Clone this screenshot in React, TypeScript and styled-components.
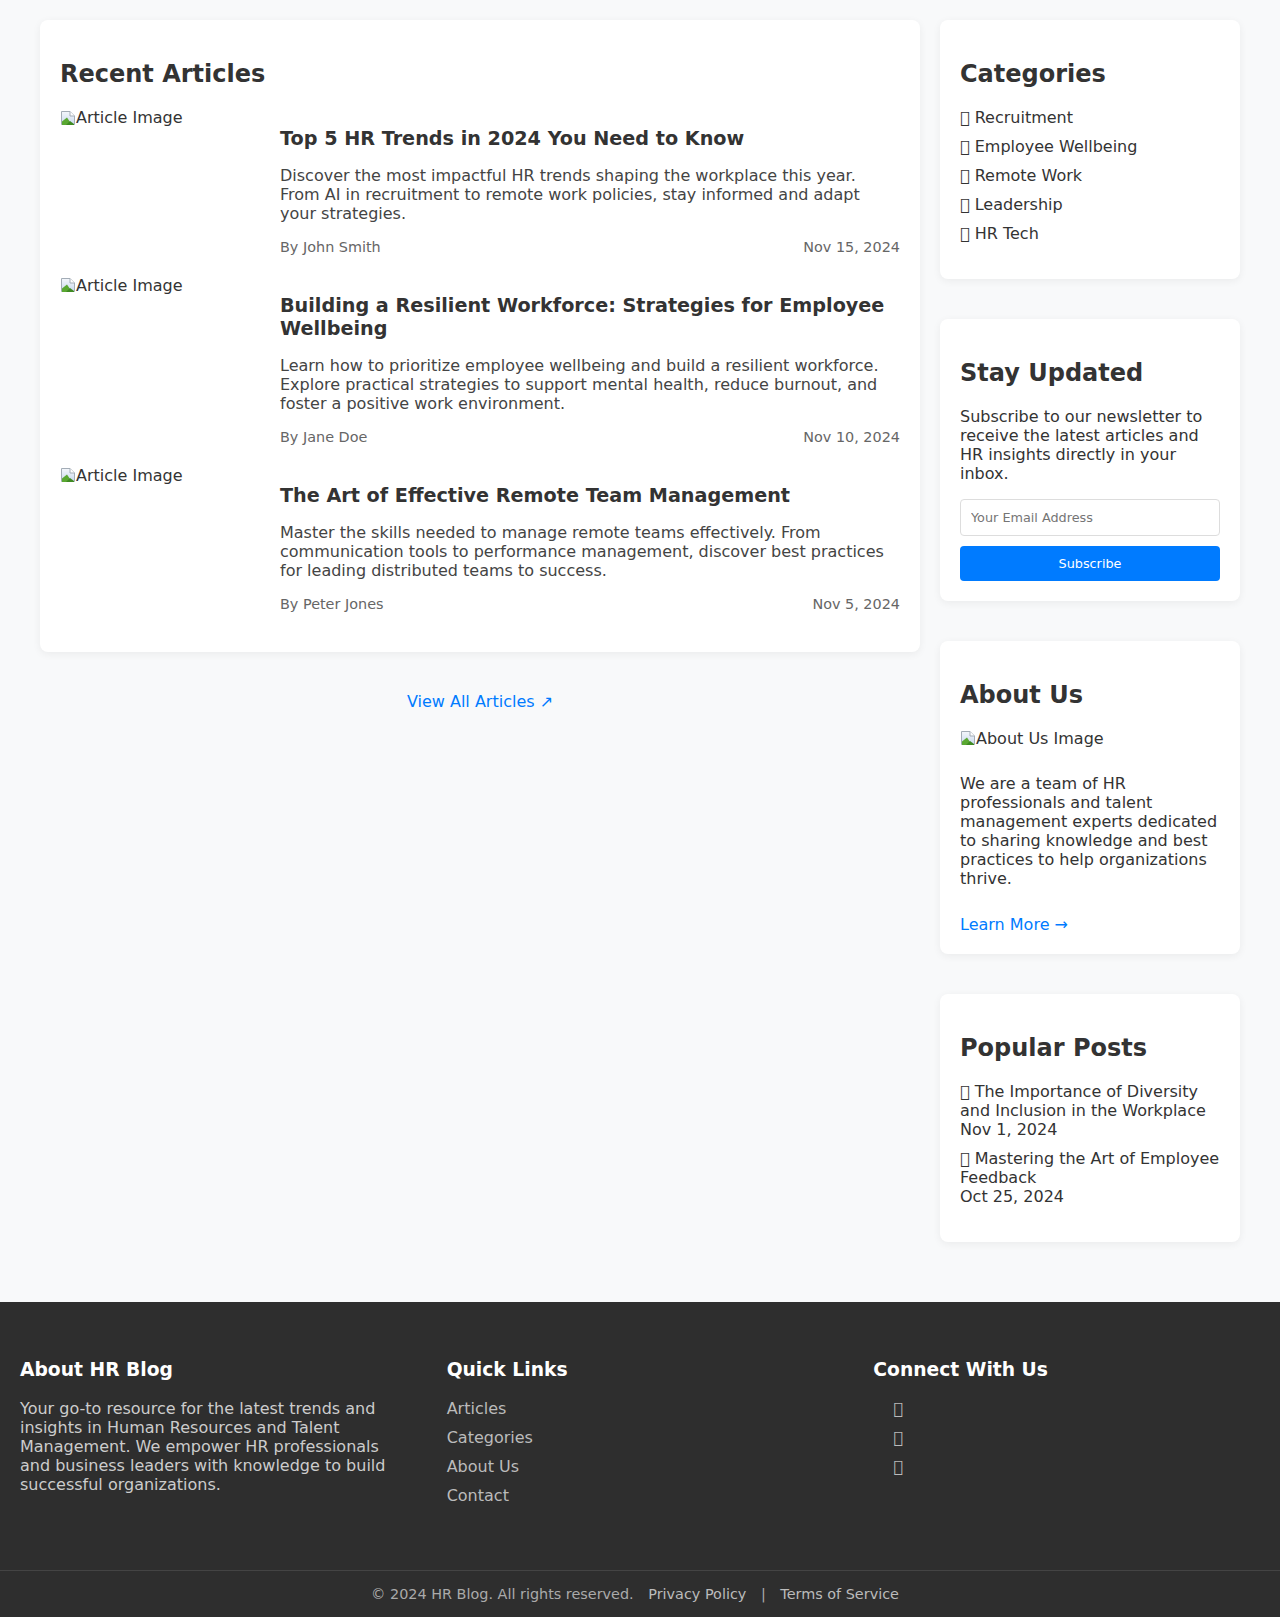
import React from 'react';
import styled, { createGlobalStyle } from 'styled-components';

const GlobalStyle = createGlobalStyle`
  *, *::before, *::after { box-sizing: border-box; }
  html, body { margin: 0; padding: 0; }
  body {
    background: #f8f9fa;
    font-family: "DejaVu Sans", "Noto Sans", sans-serif;
    font-size: 16px;
    color: #333;
  }
`;

const Container = styled.div`
  max-width: 1240px;
  margin: 0 auto;
  padding: 20px;
  display: grid;
  grid-template-columns: 1fr 300px;
  gap: 20px;
  align-items: start;
`;

const Main = styled.main`
  min-width: 0;
`;

const Card = styled.section`
  background: #fff;
  border-radius: 8px;
  padding: 20px;
  box-shadow: 0 2px 8px rgba(0, 0, 0, 0.06);
`;

const CardTitle = styled.h2`
  font-size: 24px;
  font-weight: bold;
  color: #333;
  margin: 19.92px 0;
`;

const ArticleRow = styled.article`
  display: flex;
  gap: 20px;
  margin-bottom: 20px;
`;

const ImageSlot = styled.div`
  width: 200px;
  flex-shrink: 0;
  color: #333;
  display: flex;
  align-items: center;
  align-self: flex-start;
  height: 20px;
`;

const ArticleBody = styled.div`
  flex: 1;
  min-width: 0;
`;

const ArticleTitle = styled.h3`
  font-size: 19.2px;
  font-weight: bold;
  color: #333;
  margin: 19.2px 0 16px;
`;

const Excerpt = styled.p`
  margin: 16px 0;
  color: #444;
`;

const Meta = styled.div`
  display: flex;
  justify-content: space-between;
  font-size: 14.4px;
  color: #666;
`;

const ViewAllRow = styled.div`
  text-align: center;
  margin-top: 40px;
`;

const BlueLink = styled.a`
  color: #007bff;
  text-decoration: none;
`;

const Sidebar = styled.aside`
  display: flex;
  flex-direction: column;
  gap: 40px;
`;

const PlainList = styled.ul`
  list-style: none;
  padding: 0;
  margin: 16px 0;
`;

const ListItem = styled.li`
  margin-bottom: 10px;
`;

const IconGlyph = styled.span`
  margin-right: 0;
`;

const DarkLink = styled.a`
  color: #333;
  text-decoration: none;
`;

const PostLink = styled(DarkLink)`
  display: block;
`;

const PostDate = styled.span`
  display: block;
  color: #333;
`;

const BodyText = styled.p`
  margin: 16px 0;
  color: #333;
`;

const NewsForm = styled.form`
  display: flex;
  flex-direction: column;
  gap: 10px;
`;

const EmailInput = styled.input`
  width: 100%;
  padding: 10px;
  border: 1px solid #ddd;
  border-radius: 4px;
  font-family: inherit;
  font-size: 12.8px;
  color: #333;
  background: #fff;
  &::placeholder { color: #757575; }
`;

const SubmitButton = styled.button`
  width: 100%;
  padding: 10px;
  border: none;
  border-radius: 4px;
  background: #007bff;
  color: #fff;
  font-family: inherit;
  font-size: 12.8px;
  cursor: pointer;
`;

const AboutImage = styled.div`
  display: flex;
  align-items: center;
  height: 20px;
  margin-bottom: 26px;
`;

const AboutText = styled.p`
  margin: 0 0 27px;
  color: #333;
`;

const Footer = styled.footer`
  background: #2e2e2e;
  color: #ccc;
  margin-top: 40px;
  padding-top: 38px;
`;

const FooterGrid = styled.div`
  display: grid;
  grid-template-columns: repeat(3, 1fr);
  gap: 40px;
  padding: 0 20px;
`;

const FooterHeading = styled.h3`
  font-size: 18.72px;
  font-weight: bold;
  color: #fff;
  margin: 18.72px 0;
`;

const FooterText = styled.p`
  margin: 16px 0;
  color: #ccc;
`;

const FooterLink = styled.a`
  color: #bbb;
  text-decoration: none;
`;

const SocialList = styled(PlainList)`
  padding-left: 20px;
`;

const FooterBottom = styled.div`
  margin-top: 49px;
  border-top: 1px solid #444;
  padding: 15px 0;
  text-align: center;
  font-size: 14.4px;
  color: #aaa;
`;

const BottomLink = styled.a`
  color: #bbb;
  text-decoration: none;
  margin: 0 10px;
`;

const BrokenImage: React.FC = () => (
  <svg width="16" height="16" viewBox="0 0 16 16" aria-hidden="true">
    <defs>
      <linearGradient id="sky" x1="0" y1="0" x2="0" y2="1">
        <stop offset="0" stopColor="#f4f7fb" />
        <stop offset="1" stopColor="#c9d9ee" />
      </linearGradient>
    </defs>
    <path d="M1.5 1.5h8.5l4.5 4.5v8.5h-13z" fill="url(#sky)" stroke="#a3acb6" />
    <path d="M10 1.5v4.5h4.5" fill="#fff" stroke="#a3acb6" />
    <path d="M2 15 V11.5 L7 7.5 L12 15 Z" fill="#5aa832" />
    <path d="M6 15 L10 11 L14 14 V15 Z" fill="#3f8a22" />
  </svg>
);

const articles = [
  {
    title: 'Top 5 HR Trends in 2024 You Need to Know',
    excerpt:
      'Discover the most impactful HR trends shaping the workplace this year. From AI in recruitment to remote work policies, stay informed and adapt your strategies.',
    author: 'By John Smith',
    date: 'Nov 15, 2024',
  },
  {
    title: 'Building a Resilient Workforce: Strategies for Employee Wellbeing',
    excerpt:
      'Learn how to prioritize employee wellbeing and build a resilient workforce. Explore practical strategies to support mental health, reduce burnout, and foster a positive work environment.',
    author: 'By Jane Doe',
    date: 'Nov 10, 2024',
  },
  {
    title: 'The Art of Effective Remote Team Management',
    excerpt:
      'Master the skills needed to manage remote teams effectively. From communication tools to performance management, discover best practices for leading distributed teams to success.',
    author: 'By Peter Jones',
    date: 'Nov 5, 2024',
  },
];

const categories = [
  { icon: '\uf0b1', label: 'Recruitment' },
  { icon: '\uf15c', label: 'Employee Wellbeing' },
  { icon: '\uf015', label: 'Remote Work' },
  { icon: '\uf0c0', label: 'Leadership' },
  { icon: '\uf109', label: 'HR Tech' },
];

const popular = [
  { title: 'The Importance of Diversity and Inclusion in the Workplace', date: 'Nov 1, 2024' },
  { title: 'Mastering the Art of Employee Feedback', date: 'Oct 25, 2024' },
];

const App: React.FC = () => (
  <>
    <GlobalStyle />
    <Container>
      <Main>
        <Card>
          <CardTitle>Recent Articles</CardTitle>
          {articles.map((a) => (
            <ArticleRow key={a.title}>
              <ImageSlot>
                <BrokenImage />
                <span>Article Image</span>
              </ImageSlot>
              <ArticleBody>
                <ArticleTitle>{a.title}</ArticleTitle>
                <Excerpt>{a.excerpt}</Excerpt>
                <Meta>
                  <span>{a.author}</span>
                  <span>{a.date}</span>
                </Meta>
              </ArticleBody>
            </ArticleRow>
          ))}
        </Card>
        <ViewAllRow>
          <BlueLink href="#">View All Articles ↗</BlueLink>
        </ViewAllRow>
      </Main>

      <Sidebar>
        <Card>
          <CardTitle>Categories</CardTitle>
          <PlainList>
            {categories.map((c) => (
              <ListItem key={c.label}>
                <DarkLink href="#">
                  <IconGlyph>{c.icon}</IconGlyph> {c.label}
                </DarkLink>
              </ListItem>
            ))}
          </PlainList>
        </Card>

        <Card>
          <CardTitle>Stay Updated</CardTitle>
          <BodyText>
            Subscribe to our newsletter to receive the latest articles and HR insights directly in your inbox.
          </BodyText>
          <NewsForm onSubmit={(e) => e.preventDefault()}>
            <EmailInput type="email" placeholder="Your Email Address" />
            <SubmitButton type="submit">Subscribe</SubmitButton>
          </NewsForm>
        </Card>

        <Card>
          <CardTitle>About Us</CardTitle>
          <AboutImage>
            <BrokenImage />
            <span>About Us Image</span>
          </AboutImage>
          <AboutText>
            We are a team of HR professionals and talent management experts dedicated to sharing knowledge and best
            practices to help organizations thrive.
          </AboutText>
          <BlueLink href="#">Learn More →</BlueLink>
        </Card>

        <Card>
          <CardTitle>Popular Posts</CardTitle>
          <PlainList>
            {popular.map((p) => (
              <ListItem key={p.title}>
                <PostLink href="#">
                  <IconGlyph>{'\uf15c'}</IconGlyph> {p.title}
                </PostLink>
                <PostDate>{p.date}</PostDate>
              </ListItem>
            ))}
          </PlainList>
        </Card>
      </Sidebar>
    </Container>

    <Footer>
      <FooterGrid>
        <div>
          <FooterHeading>About HR Blog</FooterHeading>
          <FooterText>
            Your go-to resource for the latest trends and insights in Human Resources and Talent Management. We
            empower HR professionals and business leaders with knowledge to build successful organizations.
          </FooterText>
        </div>
        <div>
          <FooterHeading>Quick Links</FooterHeading>
          <PlainList>
            {['Articles', 'Categories', 'About Us', 'Contact'].map((l) => (
              <ListItem key={l}>
                <FooterLink href="#">{l}</FooterLink>
              </ListItem>
            ))}
          </PlainList>
        </div>
        <div>
          <FooterHeading>Connect With Us</FooterHeading>
          <SocialList>
            {['\uf099', '\uf08c', '\uf09a'].map((g) => (
              <ListItem key={g}>
                <FooterLink href="#">{g}</FooterLink>
              </ListItem>
            ))}
          </SocialList>
        </div>
      </FooterGrid>
      <FooterBottom>
        © 2024 HR Blog. All rights reserved. <BottomLink href="#">Privacy Policy</BottomLink> |{' '}
        <BottomLink href="#">Terms of Service</BottomLink>
      </FooterBottom>
    </Footer>
  </>
);

export default App;
